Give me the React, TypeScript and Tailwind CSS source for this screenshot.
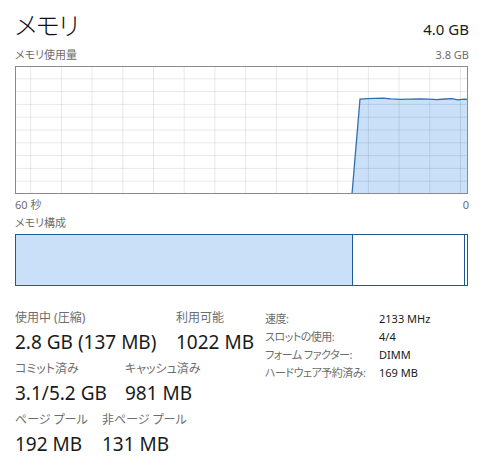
import React from "react";

const FONT = "[font-family:'Noto_Sans','Noto_Sans_CJK_JP',sans-serif] [font-feature-settings:'palt']";

// memory usage graph, relative to a 453x128 box
const W = 453;
const H = 128;
const usage: [number, number][] = [
  [337, 128], [345, 33], [352, 32.6], [360, 32.4], [368, 32.1], [376, 32.8],
  [386, 33.4], [395, 33.2], [405, 33], [414, 33.1], [422, 33.6], [430, 33],
  [437, 32.6], [443, 33.8], [449, 33.2], [453, 33.4],
];

function UsageGraph() {
  const verticals = Array.from({ length: 15 }, (_, k) => 15.7 + 30.7 * k);
  const horizontals = Array.from({ length: 9 }, (_, k) => 12.8 * (k + 1));
  const line = usage.map(([x, y]) => `${x},${y}`).join(" ");
  const area = `${line} ${W},${H}`;
  return (
    <svg width={W} height={H} viewBox={`0 0 ${W} ${H}`} className="block">
      <rect x="0" y="0" width={W} height={H} fill="#ffffff" />
      <polygon points={area} fill="#c9e0f8" />
      {verticals.map((x) => (
        <line key={x} x1={x} y1={0} x2={x} y2={H} stroke="#000" strokeOpacity="0.09" strokeWidth="1" />
      ))}
      {horizontals.map((y) => (
        <line key={y} x1={0} y1={y} x2={W} y2={y} stroke="#000" strokeOpacity="0.09" strokeWidth="1" />
      ))}
      <polyline points={line} fill="none" stroke="#2f6fb0" strokeWidth="1.3" />
      <rect x="0.5" y="0.5" width={W - 1} height={H - 1} fill="none" stroke="#8a8a8a" strokeWidth="1" />
    </svg>
  );
}

function Stat({ label, value, className = "" }: { label: string; value: string; className?: string }) {
  return (
    <div className={`flex flex-col ${className}`}>
      <span className="text-[12px] leading-[16px] text-[#6d6d6d] whitespace-nowrap">{label}</span>
      <span className="text-[19px] leading-[26px] text-[#1a1a1a] mt-[3px] whitespace-nowrap">{value}</span>
    </div>
  );
}

const specs = [
  ["速度:", "2133 MHz"],
  ["スロットの使用:", "4/4"],
  ["フォーム ファクター:", "DIMM"],
  ["ハードウェア予約済み:", "169 MB"],
];

export default function App() {
  return (
    <div className={`w-[484px] h-[467px] bg-white px-[15px] pt-[8px] ${FONT}`}>
      <div className="flex items-baseline justify-between">
        <h1 className="text-[25px] leading-[34px] font-light tracking-[-1px] text-[#111]">メモリ</h1>
        <span className="text-[15px] text-[#1a1a1a]">4.0 GB</span>
      </div>

      <div className="flex justify-between text-[11px] leading-[14px] text-[#6d6d6d] mt-[6px]">
        <span>メモリ使用量</span>
        <span>3.8 GB</span>
      </div>
      <div className="mt-[4px]">
        <UsageGraph />
      </div>
      <div className="flex justify-between text-[11px] leading-[14px] text-[#6d6d6d] mt-[4px]">
        <span>60 秒</span>
        <span>0</span>
      </div>

      <div className="text-[11px] leading-[14px] text-[#6d6d6d] mt-[4px]">メモリ構成</div>
      <div className="mt-[4px] flex h-[52px] w-[453px] border border-[#1b5a93]">
        <div className="w-[336px] bg-[#c9e0f8]" />
        <div className="flex-1 border-l border-[#1b5a93]" />
        <div className="w-[3px] border-l border-[#1b5a93]" />
      </div>

      <div className="mt-[24px] flex">
        <div className="w-[250px] flex flex-col gap-[6px]">
          <div className="flex">
            <Stat label="使用中 (圧縮)" value="2.8 GB (137 MB)" className="w-[161px]" />
            <Stat label="利用可能" value="1022 MB" />
          </div>
          <div className="flex">
            <Stat label="コミット済み" value="3.1/5.2 GB" className="w-[110px]" />
            <Stat label="キャッシュ済み" value="981 MB" />
          </div>
          <div className="flex">
            <Stat label="ページ プール" value="192 MB" className="w-[87px]" />
            <Stat label="非ページ プール" value="131 MB" />
          </div>
        </div>
        <div className="grid grid-cols-[114px_auto] auto-rows-[18px] text-[11px] items-center">
          {specs.map(([k, v]) => (
            <React.Fragment key={k}>
              <span className="text-[#6d6d6d] whitespace-nowrap tracking-[-0.5px]">{k}</span>
              <span className="text-[#1a1a1a]">{v}</span>
            </React.Fragment>
          ))}
        </div>
      </div>
    </div>
  );
}
